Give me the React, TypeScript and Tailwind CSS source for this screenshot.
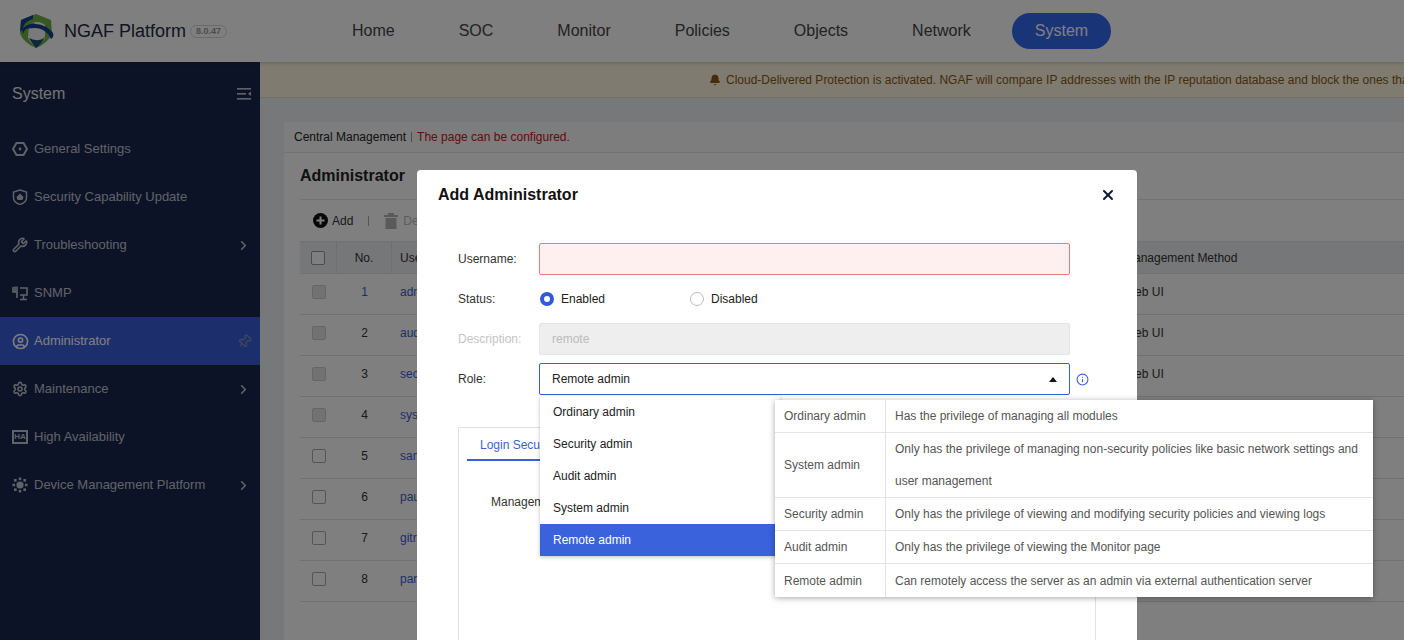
import React from 'react';
import { Bell, ChevronRight, CircleUser, Info, Pin, Settings, Wrench, X } from 'lucide-react';

const navItems = ['Home', 'SOC', 'Monitor', 'Policies', 'Objects', 'Network', 'System'];

const Logo: React.FC = () => (
  <svg width="38" height="36" viewBox="0 0 38 36" className="shrink-0">
    <path d="M19 1 L34 7 L35 20 C33 27 26 32 19 35 C12 32 5 27 3 20 L4 7 Z" fill="#6fb043" />
    <path d="M12 12 C16 8 24 8 28 12 L28 25 C25 29 22 32 19 34 C16 32 13 29 11 25 Z" fill="#f4f4f4" />
    <path d="M16 2 L4 7 L3 19 C7 13 13 10 19 10 C13 12 8 15 6 21 C4 15 8 8 16 6 Z" fill="#12408f" />
    <path d="M4 18 C10 9 26 8 36 20 C37 22 36 25 34 26 C31 19 25 15 18 15 C12 15 7 16 4 18 Z" fill="#133f91" />
    <path d="M12 25 C15 31 18 33 19 35 C22 33 25 30 28 23 C26 27 21 29 12 25 Z" fill="#1d4f7a" />
  </svg>
);

const HexIcon: React.FC = () => (
  <svg width="16" height="16" viewBox="0 0 16 16" fill="none" stroke="currentColor" strokeWidth="2">
    <path d="M4.5 2 H11.5 L15 8 L11.5 14 H4.5 L1 8 Z" />
    <circle cx="8" cy="8" r="1.4" fill="currentColor" stroke="none" />
  </svg>
);

const ShieldIcon: React.FC = () => (
  <svg width="16" height="16" viewBox="0 0 16 16" fill="none" stroke="currentColor" strokeWidth="1.5">
    <path d="M8 1 L14.5 3 V9 C14.5 12 11 14.5 8 15.5 C5 14.5 1.5 12 1.5 9 V3 Z" />
    <path d="M8 4.5 L11.5 8 L10.5 11 H5.5 L4.5 8 Z" fill="currentColor" stroke="none" />
  </svg>
);

const SnmpIcon: React.FC = () => (
  <svg width="16" height="16" viewBox="0 0 16 16" fill="none" stroke="currentColor" strokeWidth="1.6">
    <path d="M1 2 V7 H5.5 M5 1.5 V13 M3 1.5 V7" />
    <path d="M8 3 H15 V10 H8 M11.5 10 V14 M8 14.5 H15" />
  </svg>
);

const HaIcon: React.FC = () => (
  <span className="flex h-[14px] w-4 items-center justify-center border-2 border-current text-[8px] leading-none font-bold">
    HA
  </span>
);

const DeviceIcon: React.FC = () => (
  <svg width="16" height="16" viewBox="0 0 16 16" fill="currentColor">
    <circle cx="8" cy="8" r="3.6" />
    <rect x="6.8" y="0.5" width="2.4" height="2.6" />
    <rect x="6.8" y="12.9" width="2.4" height="2.6" />
    <rect x="0.5" y="6.8" width="2.6" height="2.4" />
    <rect x="12.9" y="6.8" width="2.6" height="2.4" />
    <rect x="2" y="2" width="2.6" height="2.6" />
    <rect x="11.4" y="2" width="2.6" height="2.6" />
    <rect x="2" y="11.4" width="2.6" height="2.6" />
    <rect x="11.4" y="11.4" width="2.6" height="2.6" />
  </svg>
);

const sideItems = [
  { label: 'General Settings', icon: <HexIcon /> },
  { label: 'Security Capability Update', icon: <ShieldIcon /> },
  { label: 'Troubleshooting', icon: <Wrench size={16} strokeWidth={2.4} />, more: true },
  { label: 'SNMP', icon: <SnmpIcon /> },
  { label: 'Administrator', icon: <CircleUser size={17} strokeWidth={2.2} />, active: true },
  { label: 'Maintenance', icon: <Settings size={16} strokeWidth={2.4} />, more: true },
  { label: 'High Availability', icon: <HaIcon /> },
  { label: 'Device Management Platform', icon: <DeviceIcon />, more: true },
];

const rows = [
  { no: 1, name: 'admin', filled: true },
  { no: 2, name: 'audit', filled: true },
  { no: 3, name: 'security', filled: true },
  { no: 4, name: 'system', filled: true },
  { no: 5, name: 'sam', filled: false },
  { no: 6, name: 'paul', filled: false },
  { no: 7, name: 'gitroot', filled: false },
  { no: 8, name: 'park', filled: false },
];

const roles = ['Ordinary admin', 'Security admin', 'Audit admin', 'System admin', 'Remote admin'];

const roleInfo = [
  { role: 'Ordinary admin', text: 'Has the privilege of managing all modules', h: 'h-[33px]' },
  {
    role: 'System admin',
    text: 'Only has the privilege of managing non-security policies like basic network settings and user management',
    h: 'h-[65px]',
  },
  { role: 'Security admin', text: 'Only has the privilege of viewing and modifying security policies and viewing logs', h: 'h-[33px]' },
  { role: 'Audit admin', text: 'Only has the privilege of viewing the Monitor page', h: 'h-[33px]' },
  { role: 'Remote admin', text: 'Can remotely access the server as an admin via external authentication server', h: 'h-[33px]' },
];

const App: React.FC = () => {
  return (
    <div className="relative h-[640px] w-[1404px] overflow-hidden bg-[#eef0f5] font-['Liberation_Sans',Arial,sans-serif] text-xs text-[#333]">
      <header className="flex h-[62px] items-center bg-white shadow-[0_1px_4px_rgba(0,0,0,0.2)] relative z-10">
        <div className="ml-[17px] flex w-[312px] shrink-0 items-center">
          <Logo />
          <span className="ml-[9px] text-lg leading-none text-[#1e2a44]">NGAF Platform</span>
          <span className="ml-1 rounded-full border border-[#d5d5d5] px-[5px] text-[9px] leading-[11px] font-bold text-[#999]">8.0.47</span>
        </div>
        <nav className="flex items-center gap-[18px]">
          {navItems.map((item) => (
            <span
              key={item}
              className={
                item === 'System'
                  ? 'flex h-9 items-center rounded-full bg-[#3568f0] px-[23px] text-base text-white'
                  : 'flex h-9 items-center px-[23px] text-base text-[#444]'
              }
            >
              {item}
            </span>
          ))}
        </nav>
      </header>

      <div className="flex h-[578px]">
        <aside className="w-[260px] shrink-0 bg-[#1a264c] text-[#c0c5d2]">
          <div className="flex h-[63px] items-center justify-between pr-[9px] pl-3">
            <span className="text-base text-[#e8e8e8]">System</span>
            <svg width="14" height="14" viewBox="0 0 14 14" fill="#c0c5d2">
              <rect x="0" y="1" width="14" height="1.6" />
              <rect x="0" y="6" width="9" height="1.6" />
              <rect x="0" y="11" width="14" height="1.6" />
              <path d="M14 4.5 V9 L11 6.8 Z" />
            </svg>
          </div>
          {sideItems.map((item) => (
            <div
              key={item.label}
              className={
                item.active
                  ? 'flex h-12 items-center bg-[#3a5dd8] pr-[12px] pl-3 text-[13px] text-white'
                  : 'flex h-12 items-center pr-[12px] pl-3 text-[13px]'
              }
            >
              <span className="flex w-[22px] shrink-0 items-center">{item.icon}</span>
              <span className="flex-1">{item.label}</span>
              {item.more && <ChevronRight size={15} strokeWidth={2.6} className="-mr-[3px]" />}
              {item.active && <Pin size={15} className="-mr-[4px] rotate-45 text-[#8090c0]" />}
            </div>
          ))}
        </aside>

        <main className="min-w-0 flex-1">
          <div className="flex h-[36px] items-center border-b border-[#e6dcc4] bg-[#fff6e2] pl-[449px] whitespace-nowrap text-[#8a5a10]">
            <Bell size={12} fill="currentColor" className="mr-[5px] shrink-0" />
            <span>Cloud-Delivered Protection is activated. NGAF will compare IP addresses with the IP reputation database and block the ones that are malicious.</span>
          </div>

          <section className="mt-[24px] ml-6 h-[518px] bg-white">
            <div className="flex h-[31px] items-center border-b border-[#e2e4ea] bg-[#fafafa] pl-[10px]">
              <span className="text-[#222]">Central Management</span>
              <span className="mx-[5px] h-[10px] w-px bg-[#999]" />
              <span className="text-[#d0101c]">The page can be configured.</span>
            </div>
            <div className="ml-4">
              <div className="flex h-[47px] items-center border-b border-[#e2e4ea] text-base font-bold text-[#222]">Administrator</div>
              <div className="flex h-[41px] items-center pl-[13px]">
                <svg width="15" height="15" viewBox="0 0 15 15">
                  <circle cx="7.5" cy="7.5" r="7.5" fill="#111" />
                  <path d="M7.5 3.5 V11.5 M3.5 7.5 H11.5" stroke="#fff" strokeWidth="2" />
                </svg>
                <span className="ml-[4px] text-[#333]">Add</span>
                <span className="mx-[15px] h-[10px] w-px bg-[#aaa]" />
                <svg width="14" height="16" viewBox="0 0 14 16" fill="#b5b5b5">
                  <rect x="0" y="2" width="14" height="2" />
                  <rect x="4" y="0" width="6" height="2" />
                  <path d="M1.5 5 H12.5 V16 H1.5 Z" />
                </svg>
                <span className="ml-[5px] text-[#bbb]">Delete</span>
              </div>
              <div className="flex h-[33px] items-center border-y border-[#e2e4ea] bg-[#eceef3]">
                <div className="flex h-full w-[37px] items-center justify-center border-r border-[#dcdee5]">
                  <span className="h-[14px] w-[14px] rounded-[2px] border border-[#999] bg-white" />
                </div>
                <div className="flex h-full w-[55px] items-center justify-center border-r border-[#dcdee5]">No.</div>
                <div className="w-[732px] pl-2">Username</div>
                <div className="">Management Method</div>
              </div>
              {rows.map((row) => (
                <div key={row.no} className="flex h-[41px] items-center border-b border-[#dfe1e8] pb-[4px]">
                  <div className="flex w-[37px] justify-center">
                    <span
                      className={
                        row.filled
                          ? 'h-[14px] w-[14px] rounded-[2px] border border-[#ccc] bg-[#e4e4e4]'
                          : 'h-[14px] w-[14px] rounded-[2px] border border-[#aaa] bg-white'
                      }
                    />
                  </div>
                  <div className={row.filled && row.no < 2 ? 'w-[55px] text-center text-[#3a5dd8]' : 'w-[55px] text-center'}>{row.no}</div>
                  <div className="w-[732px] pl-2 text-[#3a5dd8]">{row.name}</div>
                  <div>Web UI</div>
                </div>
              ))}
            </div>
          </section>
        </main>
      </div>

      {/* dim layer under the dialog */}
      <div className="absolute inset-0 z-20 bg-black/50" />

      <div className="absolute top-[170px] left-[417px] z-30 h-[520px] w-[720px] rounded-[4px] bg-white">
        <div className="flex h-[50px] items-center justify-between pr-[21px] pl-[21px]">
          <span className="text-base font-bold text-[#111]">Add Administrator</span>
          <X size={16} strokeWidth={3} className="text-[#10192e]" />
        </div>
        <div className="mt-[23px] flex flex-col gap-2 pl-[41px]">
          <div className="flex h-8 items-center">
            <span className="w-[81px] text-[#333]">Username:</span>
            <div className="h-8 w-[531px] rounded-[2px] border border-[#f07878] bg-[#fff0f0]" />
          </div>
          <div className="flex h-8 items-center">
            <span className="w-[82px] text-[#333]">Status:</span>
            <span className="flex w-[150px] items-center">
              <span className="h-[14px] w-[14px] rounded-full border-[4px] border-[#2f5ad8] bg-white" />
              <span className="ml-[7px] text-[#222]">Enabled</span>
            </span>
            <span className="flex items-center">
              <span className="h-[14px] w-[14px] rounded-full border border-[#bbb] bg-white" />
              <span className="ml-[7px] text-[#222]">Disabled</span>
            </span>
          </div>
          <div className="flex h-8 items-center">
            <span className="w-[81px] text-[#c4c4c4]">Description:</span>
            <div className="flex h-8 w-[531px] items-center rounded-[2px] border border-[#e4e4e4] bg-[#eeeeee] pl-3 text-[#bbb]">remote</div>
          </div>
          <div className="flex h-8 items-center">
            <span className="w-[81px] text-[#333]">Role:</span>
            <div className="flex h-8 w-[531px] items-center justify-between rounded-[2px] border border-[#3a5fd9] pr-[12px] pl-3 text-[#222]">
              <span>Remote admin</span>
              <svg width="8" height="5" viewBox="0 0 8 5" fill="#111">
                <path d="M4 0 L8 5 H0 Z" />
              </svg>
            </div>
            <Info size={13} className="ml-[6px] text-[#3a5fd9]" />
          </div>
        </div>
        <div className="mt-[32px] ml-[41px] h-[300px] w-[638px] border border-[#dde1ea]">
          <div className="mx-2 h-[33px] border-b border-[#dde1ea]">
            <span className="inline-block h-[33px] w-[120px] border-b-2 border-[#3a5fd9] pt-[9px] pl-[13px] text-[#3a5fd9]">Login Security</span>
          </div>
          <div className="mt-[33px] pl-[32px] text-[#333]">Management Method:</div>
        </div>
      </div>

      <div className="absolute top-[396px] left-[540px] z-40 w-[240px] bg-white shadow-[0_1px_4px_rgba(0,0,0,0.25)]">
        {roles.map((role) => (
          <div
            key={role}
            className={
              role === 'Remote admin'
                ? 'flex h-8 items-center bg-[#3a62dc] pl-[13px] text-white'
                : 'flex h-8 items-center pl-[13px] text-[#222]'
            }
          >
            {role}
          </div>
        ))}
      </div>

      <div className="absolute top-[400px] left-[775px] z-50 w-[598px] bg-white text-[#555] shadow-[0_1px_6px_rgba(0,0,0,0.35)]">
        {roleInfo.map((info) => (
          <div key={info.role} className={`flex items-center border-b border-[#e4e4e4] last:border-b-0 ${info.h}`}>
            <div className="flex h-full w-[111px] shrink-0 items-center border-r border-[#e4e4e4] pl-[9px]">{info.role}</div>
            <div className="pr-[10px] pl-[9px] leading-[32px]">{info.text}</div>
          </div>
        ))}
      </div>
    </div>
  );
};

export default App;
